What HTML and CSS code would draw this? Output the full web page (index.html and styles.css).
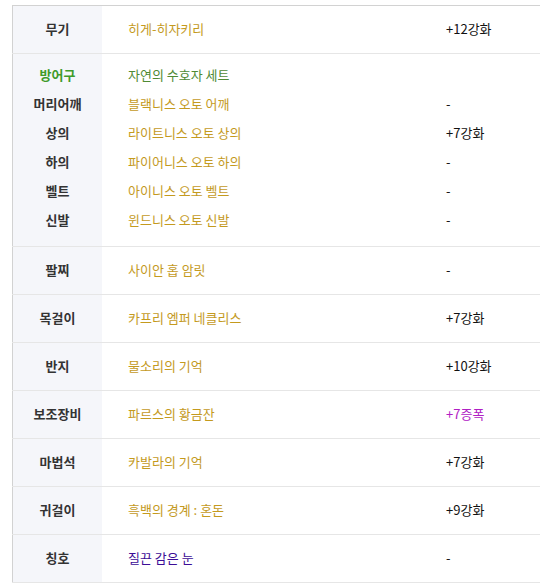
FILE: index.html
```html
<!DOCTYPE html>
<html>
<head>
    <title>장비</title>
    <link rel="stylesheet" href="styles.css">
</head>
<body>
    <div class="wrap">
        <table class="equip">
            <tr>
                <th>무기</th>
                <td class="name gold">히게-히자키리</td>
                <td class="enh">+12강화</td>
            </tr>
            <tr class="group">
                <th>
                    <div class="line set">방어구</div>
                    <div class="line">머리어깨</div>
                    <div class="line">상의</div>
                    <div class="line">하의</div>
                    <div class="line">벨트</div>
                    <div class="line">신발</div>
                </th>
                <td class="name">
                    <div class="line green">자연의 수호자 세트</div>
                    <div class="line gold">블랙니스 오토 어깨</div>
                    <div class="line gold">라이트니스 오토 상의</div>
                    <div class="line gold">파이어니스 오토 하의</div>
                    <div class="line gold">아이니스 오토 벨트</div>
                    <div class="line gold">윈드니스 오토 신발</div>
                </td>
                <td class="enh">
                    <div class="line"></div>
                    <div class="line">-</div>
                    <div class="line">+7강화</div>
                    <div class="line">-</div>
                    <div class="line">-</div>
                    <div class="line">-</div>
                </td>
            </tr>
            <tr>
                <th>팔찌</th>
                <td class="name gold">사이안 홉 암릿</td>
                <td class="enh">-</td>
            </tr>
            <tr>
                <th>목걸이</th>
                <td class="name gold">카프리 엠퍼 네클리스</td>
                <td class="enh">+7강화</td>
            </tr>
            <tr>
                <th>반지</th>
                <td class="name gold">물소리의 기억</td>
                <td class="enh">+10강화</td>
            </tr>
            <tr>
                <th>보조장비</th>
                <td class="name gold">파르스의 황금잔</td>
                <td class="enh amp">+7증폭</td>
            </tr>
            <tr>
                <th>마법석</th>
                <td class="name gold">카발라의 기억</td>
                <td class="enh">+7강화</td>
            </tr>
            <tr>
                <th>귀걸이</th>
                <td class="name gold">흑백의 경계 : 혼돈</td>
                <td class="enh">+9강화</td>
            </tr>
            <tr>
                <th>칭호</th>
                <td class="name purple">질끈 감은 눈</td>
                <td class="enh">-</td>
            </tr>
        </table>
    </div>
</body>
</html>
```

FILE: styles.css
```css
body {
    margin: 0;
    background-color: #ffffff;
    font-family: "Noto Sans CJK KR", "Noto Sans", sans-serif;
    font-size: 13px;
    color: #222222;
    overflow: hidden;
}
.wrap {
    padding: 5px 0 0 12px;
}
.equip {
    width: 529px;
    border-collapse: collapse;
    border: 1px solid #d2d2d2;
}
.equip tr {
    border-bottom: 1px solid #e6e6e6;
}
.equip th,
.equip td {
    height: 44px;
    padding: 0 0 3px 0;
    vertical-align: middle;
    line-height: 29px;
}
.equip th {
    width: 89px;
    background-color: #f5f6fa;
    color: #333333;
    font-weight: bold;
    text-align: center;
}
.name {
    width: 318px;
    padding-left: 26px !important;
}
.enh {
    color: #111111;
}
.group th,
.group td {
    padding-top: 6px;
    padding-bottom: 12px;
}
.line {
    height: 29px;
}
.gold {
    color: #c49a1e;
}
.green {
    color: #4f8a34;
}
.set {
    color: #3f9b2a;
}
.purple {
    color: #3c0d96;
}
.amp {
    color: #b020c4;
}
```
